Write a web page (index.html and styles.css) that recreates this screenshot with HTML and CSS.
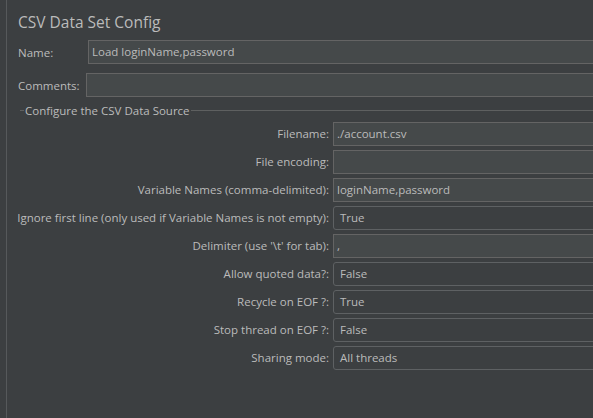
FILE: index.html
```html
<!DOCTYPE html>
<html lang="en">
<head>
    <meta charset="UTF-8">
    <title>CSV Data Set Config</title>
    <link rel="stylesheet" href="styles.css">
</head>
<body>
    <div class="panel">
        <h1 class="title">CSV Data Set Config</h1>

        <div class="row name-row">
            <label>Name:</label>
            <div class="field text">Load loginName,password</div>
        </div>
        <div class="row comments-row">
            <label>Comments:</label>
            <div class="field text"></div>
        </div>

        <div class="group">
            <div class="legend">
                <span class="tick"></span>
                <span class="legend-text">Configure the CSV Data Source</span>
                <span class="rule"></span>
            </div>

            <div class="form-grid">
                <label>Filename:</label>
                <div class="field text">./account.csv</div>

                <label>File encoding:</label>
                <div class="field text"></div>

                <label>Variable Names (comma-delimited):</label>
                <div class="field text">loginName,password</div>

                <label>Ignore first line (only used if Variable Names is not empty):</label>
                <div class="field combo">True</div>

                <label>Delimiter (use '\t' for tab):</label>
                <div class="field text">,</div>

                <label>Allow quoted data?:</label>
                <div class="field combo">False</div>

                <label>Recycle on EOF ?:</label>
                <div class="field combo">True</div>

                <label>Stop thread on EOF ?:</label>
                <div class="field combo">False</div>

                <label>Sharing mode:</label>
                <div class="field combo">All threads</div>
            </div>
        </div>
    </div>
</body>
</html>
```
FILE: styles.css
```css
html, body {
    margin: 0;
    padding: 0;
    overflow: hidden;
}
body {
    background-color: #3c3f41;
    color: #bbbbbb;
    font-family: 'Open Sans', sans-serif;
    font-size: 11.5px;
    width: 593px;
    height: 418px;
}
.panel {
    margin-left: 6px;
    border-left: 1px solid #56595b;
    height: 418px;
    width: 620px;
    padding-left: 11px;
    box-sizing: border-box;
}
.title {
    margin: 0;
    padding-top: 10px;
    font-size: 15.5px;
    font-weight: normal;
    line-height: 24px;
}
.row {
    display: flex;
    align-items: center;
    height: 24px;
}
.name-row {
    margin-top: 6px;
}
.name-row label {
    width: 70px;
}
.comments-row {
    margin-top: 9px;
}
.comments-row label {
    width: 68px;
}
.field {
    flex: 1;
    height: 24px;
    box-sizing: border-box;
    line-height: 22px;
    white-space: nowrap;
}
.field.text {
    background-color: #45494a;
    border: 1px solid #646464;
    padding-left: 3px;
}
.field.combo {
    background-color: #3c3f41;
    border: 1px solid #5e6163;
    border-radius: 3px;
    padding-left: 6px;
}
.group {
    margin-top: 5px;
    margin-left: 2px;
}
.legend {
    display: flex;
    align-items: center;
    height: 16px;
}
.tick {
    width: 4px;
    border-top: 1px solid #5e6060;
}
.legend-text {
    padding: 0 1px;
}
.rule {
    flex: 1;
    border-top: 1px solid #5e6060;
}
.form-grid {
    display: grid;
    grid-template-columns: 313px 1fr;
    grid-auto-rows: 24px;
    column-gap: 4px;
    row-gap: 4px;
    margin-top: 4px;
    margin-left: -4px;
}
.form-grid label {
    text-align: right;
    line-height: 24px;
    white-space: nowrap;
}
```
